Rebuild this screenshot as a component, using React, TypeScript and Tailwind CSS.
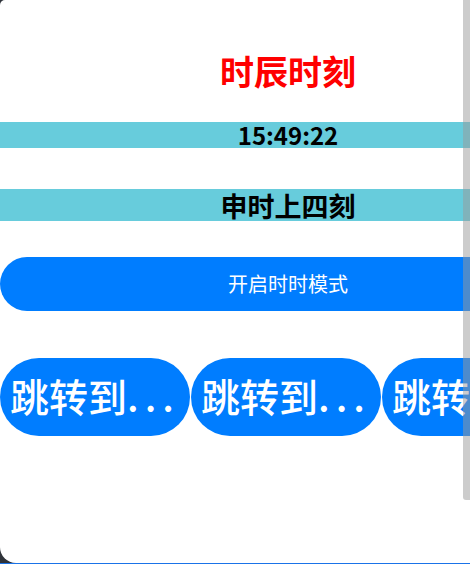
import React from 'react';

const FONT = { fontFamily: '"Noto Sans CJK SC", "Noto Sans", sans-serif' };

const JUMPS = ['跳转到', '跳转到', '跳转到'];

export default function App() {
  return (
    <div className="relative h-[564px] w-[470px] overflow-hidden bg-[#2f333a]" style={FONT}>
      <div className="h-[563px] overflow-hidden rounded-tl-[5px] rounded-bl-[16px] bg-white">
        <div className="flex w-[576px] flex-col">
          <div className="flex h-[122px] items-center justify-center pt-[20px]">
            <span className="text-[34px] font-bold leading-none text-[#ff0000]">时辰时刻</span>
          </div>

          <div className="flex h-[26px] items-center justify-center bg-[#67ccdc]">
            <span className="text-[24px] font-bold leading-none text-black">15:49:22</span>
          </div>

          <div className="h-[41px]" />

          <div className="flex h-[32px] items-center justify-center bg-[#67ccdc]">
            <span className="text-[27px] font-bold leading-none text-black">申时上四刻</span>
          </div>

          <div className="h-[36px]" />

          <button className="flex h-[54px] w-[576px] items-center justify-center rounded-full bg-[#007dff]">
            <span className="text-[20px] leading-none text-white">开启时时模式</span>
          </button>

          <div className="h-[47px]" />

          <div className="flex gap-[1px]">
            {JUMPS.map((label, i) => (
              <button
                key={i}
                className="flex h-[78px] w-[190px] shrink-0 items-center justify-center overflow-hidden rounded-full bg-[#007dff] px-[8px] pb-[4px]"
              >
                <span className="whitespace-nowrap text-[39px] font-medium leading-none text-white">
                  {label}
                  <span className="tracking-[6px]">...</span>
                </span>
              </button>
            ))}
          </div>
        </div>
      </div>
      <div className="h-px bg-[#1a73e8]" />

      {/* scrollbar overlay */}
      <div className="absolute right-0 top-0 h-[500px] w-[7px] rounded-bl-[3px] bg-[#9a9a9a]/50" />
    </div>
  );
}
